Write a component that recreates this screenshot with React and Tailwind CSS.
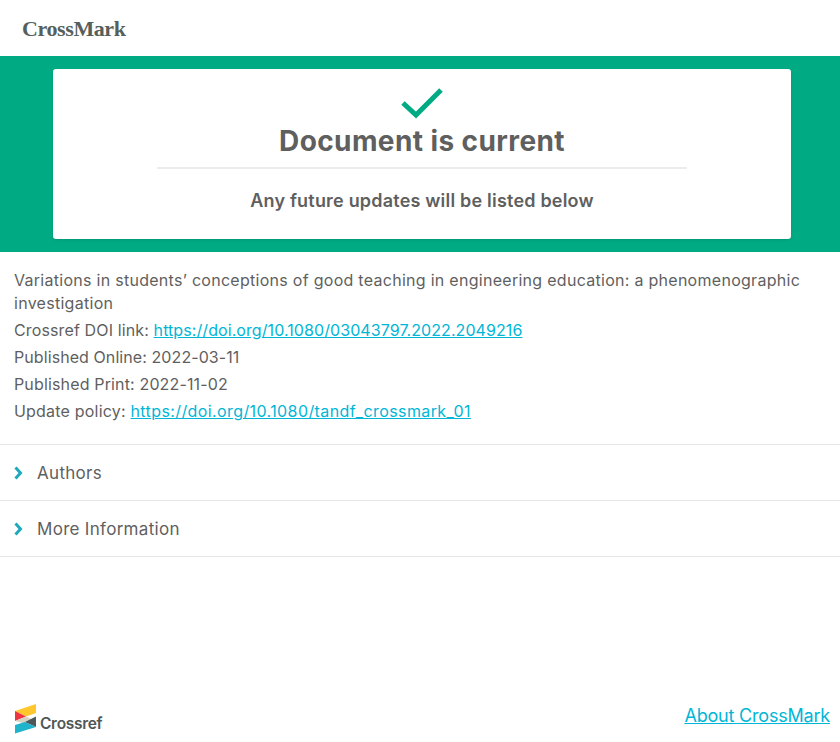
import React from "react";

function Chevron() {
  return (
    <svg width="9" height="14" viewBox="0 0 9 14" className="-ml-px shrink-0">
      <path d="M1.5 1.5 L6.5 7 L1.5 12.5" fill="none" stroke="#1fa9bd" strokeWidth="3" />
    </svg>
  );
}

function Row({ label }) {
  return (
    <div className="flex h-14 items-center gap-[14px] border-b border-[#e8e8e8] pl-[15px]">
      <Chevron />
      <span className="pt-0.5 text-[17px] tracking-[0.3px] text-[#5f5f5f]">{label}</span>
    </div>
  );
}

const link = "text-[#00b6d6] underline";

export default function App() {
  return (
    <div className="flex h-[742px] w-[840px] flex-col bg-white font-['Inter',sans-serif] text-[#5f5f5f]">
      <header className="flex h-14 items-center pl-[22px]">
        <span className="font-['Liberation_Serif',serif] text-[22px] font-bold tracking-[-0.4px] text-[#55605c]">CrossMark</span>
      </header>
      <section className="flex h-[196px] justify-center bg-[#00ab84] pt-[13px] pl-1">
        <div className="flex h-[170px] w-[738px] flex-col items-center rounded-[3px] bg-white shadow-sm">
          <svg width="42" height="32" viewBox="0 0 42 32" className="mt-[18px]">
            <path d="M2 16 L15 28 L40 3" fill="none" stroke="#00ab84" strokeWidth="5" />
          </svg>
          <h1 className="mt-[3px] text-[28px] leading-[38px] font-bold tracking-[0.4px]">Document is current</h1>
          <div className="mt-[7px] h-0.5 w-[530px] bg-[#ececec]" />
          <p className="mt-5 text-lg leading-6 font-semibold tracking-[0.2px]">Any future updates will be listed below</p>
        </div>
      </section>
      <section className="border-b border-[#e8e8e8] pt-[17px] pr-[15px] pb-[19px] pl-[14px] text-base leading-[27px] tracking-[0.08px]">
        <p className="pb-0.5 leading-[23px] tracking-[0.28px]">Variations in students’ conceptions of good teaching in engineering education: a phenomenographic investigation</p>
        <p><span className="tracking-[0.13px]">Crossref DOI link: </span><a className={link}>https://doi.org/10.1080/03043797.2022.2049216</a></p>
        <p>Published Online: 2022-03-11</p>
        <p className="tracking-[0.15px]">Published Print: 2022-11-02</p>
        <p><span className="tracking-[0.2px]">Update policy: </span><a className={`${link} tracking-[0.4px]`}>https://doi.org/10.1080/tandf_crossmark_01</a></p>
      </section>
      <Row label="Authors" />
      <Row label="More Information" />
      <footer className="mt-auto flex items-end justify-between pr-2.5 pb-2 pl-[15px]">
        <div className="flex items-end gap-[3px]">
          <svg width="22" height="30" viewBox="0 0 22 30">
            <path d="M0 7 L21 0 V9 L11 12.5 L0 7 Z" fill="#ffc72c" />
            <path d="M0 7 L11 12.5 L0 17 Z" fill="#ef3340" />
            <path d="M0 17 L11 12.5 L21 17 L11 20 Z" fill="#d8d2c4" />
            <path d="M21 12.5 V23 L10 18 Z" fill="#4f5858" />
            <path d="M0 21 L10 18 L21 23 L0 29.5 Z" fill="#1fb3cc" />
          </svg>
          <span className="text-[15.5px] leading-5 font-semibold tracking-[-0.3px] text-[#4f5858]">Crossref</span>
        </div>
        <a className="mb-1.5 text-lg leading-6 tracking-[-0.2px] text-[#00b6d6] underline">About CrossMark</a>
      </footer>
    </div>
  );
}
